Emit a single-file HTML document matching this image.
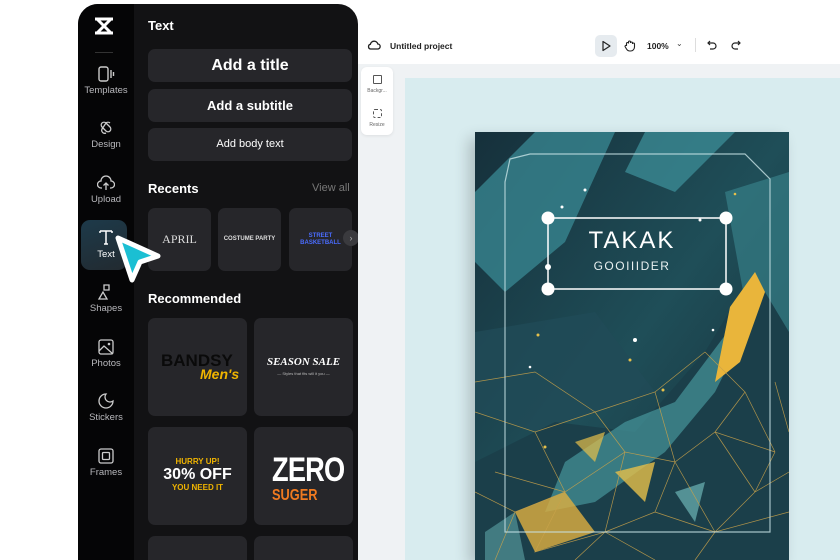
<!DOCTYPE html>
<html><head><meta charset="utf-8"><style>
*{margin:0;padding:0;box-sizing:border-box}
body{width:840px;height:560px;overflow:hidden;background:#fff;font-family:"Liberation Sans",sans-serif;position:relative}
.abs{position:absolute}
.panel{left:78px;top:4px;width:280px;height:556px;background:#121214;border-radius:20px 20px 0 0;overflow:hidden}
.nav{left:0;top:0;width:56px;height:100%;background:#050506}
.ni{position:absolute;left:0;width:56px;text-align:center;color:#b8b8bc;font-size:9.5px}
.ni svg{display:block;margin:0 auto 3px}
.btn{position:absolute;left:70px;width:204px;background:#26262a;border-radius:7px;color:#fff;text-align:center;font-weight:bold}
.card{position:absolute;background:#26262a;border-radius:7px}
.h{position:absolute;color:#fff;font-weight:bold;font-size:13px;left:70px}
</style></head><body>
<div class="abs" style="left:358px;top:64px;width:482px;height:496px;background:#eff2f4"></div>
<div class="abs" style="left:405px;top:78px;width:435px;height:482px;background:#d8ecef"></div>
<svg class="abs" style="left:367px;top:38px" width="14" height="14" viewBox="0 0 14 14"><path d="M3.5 11h7a2.5 2.5 0 0 0 .3-5A3.8 3.8 0 0 0 3.4 6.3 2.4 2.4 0 0 0 3.5 11z" fill="none" stroke="#222" stroke-width="1.3"/></svg>
<div class="abs" style="left:390px;top:41px;font-size:8.5px;color:#222;font-weight:bold">Untitled project</div>
<div class="abs" style="left:595px;top:35px;width:22px;height:22px;background:#e6ebef;border-radius:5px"></div>
<svg class="abs" style="left:600px;top:40px" width="12" height="12" viewBox="0 0 12 12"><path d="M3 1.5v9l7-4.5z" fill="none" stroke="#222" stroke-width="1.2" stroke-linejoin="round"/></svg>
<svg class="abs" style="left:623px;top:39px" width="13" height="13" viewBox="0 0 13 13"><path d="M3.5 7V4.5a1 1 0 0 1 2 0V3a1 1 0 0 1 2 0v1a1 1 0 0 1 2 0v1a1 1 0 0 1 2 0v3a4 4 0 0 1-4 4H7a4 4 0 0 1-3.5-2L2 7.5a1 1 0 0 1 1.5-1z" fill="none" stroke="#222" stroke-width="1.1"/></svg>
<div class="abs" style="left:647px;top:41px;font-size:8.5px;color:#222;font-weight:bold">100%</div>
<div class="abs" style="left:676px;top:39px;font-size:8px;color:#444">⌄</div>
<div class="abs" style="left:695px;top:38px;width:1px;height:14px;background:#ddd"></div>
<svg class="abs" style="left:706px;top:39px" width="12" height="12" viewBox="0 0 12 12"><path d="M4 2L2 4l2 2M2 4h5a3 3 0 0 1 0 6H4" fill="none" stroke="#222" stroke-width="1.2"/></svg>
<svg class="abs" style="left:730px;top:39px" width="12" height="12" viewBox="0 0 12 12"><path d="M8 2l2 2-2 2M10 4H5a3 3 0 0 0 0 6h3" fill="none" stroke="#222" stroke-width="1.2"/></svg>
<div class="abs" style="left:361px;top:67px;width:32px;height:68px;background:#fff;border-radius:6px;box-shadow:0 1px 3px rgba(0,0,0,.08)"></div>
<div class="abs" style="left:373px;top:75px;width:9px;height:9px;border:1px solid #555;border-radius:1px"></div>
<div class="abs" style="left:361px;top:88px;width:32px;text-align:center;font-size:5px;color:#666">Backgr...</div>
<div class="abs" style="left:373px;top:109px;width:9px;height:9px;border:1px dashed #555;border-radius:2px"></div>
<div class="abs" style="left:361px;top:122px;width:32px;text-align:center;font-size:5px;color:#666">Resize</div>
<svg class="abs" style="left:475px;top:132px;box-shadow:-6px 6px 14px rgba(0,0,0,.2)" width="314" height="428" viewBox="0 0 314 428">
<defs><linearGradient id="g" x1="0" y1="0" x2="1" y2="1"><stop offset="0" stop-color="#16303b"/><stop offset=".5" stop-color="#1f4e58"/><stop offset="1" stop-color="#152c36"/></linearGradient></defs>
<rect width="314" height="428" fill="url(#g)"/>
<polygon points="60,0 140,0 90,110 30,160 0,130 0,60" fill="#3a8a94" opacity=".75"/>
<polygon points="170,0 260,0 200,60 150,40" fill="#3f939c" opacity=".7"/>
<polygon points="250,60 314,40 314,200 270,170" fill="#367f88" opacity=".7"/>
<polygon points="0,200 120,180 180,260 60,300 0,280" fill="#214b57" opacity=".8"/>
<polygon points="0,330 80,290 160,300 230,220 260,170 290,160 314,200 314,428 0,428" fill="#1b3f4a"/>
<polygon points="90,330 150,290 200,270 230,230 260,190 270,200 240,260 190,320 120,370 70,380" fill="#4fa3a8" opacity=".6"/>
<polygon points="255,175 280,140 290,160 265,230 240,250" fill="#e9b53b"/>
<polygon points="40,380 90,360 120,400 60,420" fill="#e0b040" opacity=".8"/>
<polygon points="140,340 180,330 170,370" fill="#e6c04a" opacity=".8"/>
<polygon points="100,310 130,300 120,330" fill="#e6c04a" opacity=".7"/>
<polygon points="200,360 230,350 220,390" fill="#7cc8c8" opacity=".6"/>
<polygon points="10,400 40,380 50,428 10,428" fill="#6ab8b8" opacity=".5"/>
<g stroke="#c9a24a" stroke-width=".7" fill="none" opacity=".85">
<path d="M0 280L60 300L120 280L180 260L230 220M60 300L90 360L150 320L200 330L240 300L300 320M90 360L60 420L130 400L180 428M150 320L130 400M200 330L240 400L314 380M240 300L280 360L240 400M300 320L280 360M20 340L90 360M180 260L200 330M120 280L150 320M0 360L40 380L90 360M40 380L20 428M130 400L100 428M240 400L220 428M280 360L314 340M200 330L180 380L240 400M180 380L130 400M300 250L314 300M270 260L300 320M230 220L270 260L240 300M0 250L60 240L120 280"/>
</g>
<path d="M35 27L55 22H270L295 47V400H30V50Z" fill="none" stroke="#c8e4e6" stroke-width="1.2" opacity=".8"/>
<g fill="#fff"><circle cx="110" cy="58" r="1.5"/><circle cx="87" cy="75" r="1.5"/><circle cx="225" cy="88" r="1.5"/><circle cx="160" cy="208" r="2"/><circle cx="55" cy="235" r="1.3"/><circle cx="238" cy="198" r="1.3"/></g>
<g fill="#e6c04a"><circle cx="63" cy="203" r="1.5"/><circle cx="155" cy="228" r="1.5"/><circle cx="188" cy="258" r="1.5"/><circle cx="260" cy="62" r="1.3"/><circle cx="70" cy="315" r="1.5"/></g>
<text x="157" y="116" text-anchor="middle" fill="#fff" font-family="Liberation Sans" font-size="24" letter-spacing="2">TAKAK</text>
<text x="157" y="138" text-anchor="middle" fill="#e8f0f0" font-family="Liberation Sans" font-size="12" letter-spacing="1.5">GOOIIIDER</text>
<rect x="73" y="86" width="178" height="71" fill="none" stroke="#fff" stroke-width="1.5"/>
<g fill="#fff"><circle cx="73" cy="86" r="6.5"/><circle cx="251" cy="86" r="6.5"/><circle cx="73" cy="157" r="6.5"/><circle cx="251" cy="157" r="6.5"/><circle cx="73" cy="135" r="3"/></g>
</svg>
<div class="abs panel">
<div class="abs nav"></div>
<svg class="abs" style="left:15px;top:13px" width="22" height="18" viewBox="0 0 22 18"><path d="M2 2h18M2 16h18M4 2l14 14M18 2L4 16" stroke="#fff" stroke-width="3" fill="none"/></svg>
<div class="abs" style="left:17px;top:48px;width:18px;height:1px;background:#333"></div>
<div class="ni" style="top:62px"><svg width="18" height="16" viewBox="0 0 18 16"><rect x="2" y="1" width="9" height="14" rx="2" fill="none" stroke="#ccc" stroke-width="1.4"/><path d="M14 4v8M16.5 6v4" stroke="#ccc" stroke-width="1.4"/></svg>Templates</div>
<div class="ni" style="top:116px"><svg width="18" height="16" viewBox="0 0 18 16"><path d="M5 3a3 3 0 0 1 4 0l4 4a3 3 0 0 1 0 4 3 3 0 0 1-4 0L5 7a3 3 0 0 1 0-4zM13 3a3 3 0 0 0-4 0L5 9a3 3 0 0 0 4 4" fill="none" stroke="#ccc" stroke-width="1.3"/></svg>Design</div>
<div class="ni" style="top:171px"><svg width="18" height="16" viewBox="0 0 18 16"><path d="M5 13H4a3.5 3.5 0 0 1 0-7 5 5 0 0 1 10 0 3.5 3.5 0 0 1 0 7h-1M9 15V8M6.5 10.5L9 8l2.5 2.5" fill="none" stroke="#ccc" stroke-width="1.3"/></svg>Upload</div>
<div class="abs" style="left:3px;top:216px;width:46px;height:50px;border-radius:9px;background:linear-gradient(160deg,#1d3a4a,#222a30)"></div>
<div class="ni" style="top:224px;color:#fff"><svg width="18" height="18" viewBox="0 0 18 18"><path d="M3 3h12M9 3v13M3 3v2M15 3v2M7 16h4" fill="none" stroke="#fff" stroke-width="1.5"/></svg>Text</div>
<div class="ni" style="top:280px"><svg width="18" height="16" viewBox="0 0 18 16"><path d="M7 1l5 0 0 5-5 0zM2 15L6 8l4 7z" fill="none" stroke="#ccc" stroke-width="1.3"/></svg>Shapes</div>
<div class="ni" style="top:335px"><svg width="18" height="16" viewBox="0 0 18 16"><rect x="2" y="1" width="14" height="14" rx="2" fill="none" stroke="#ccc" stroke-width="1.3"/><path d="M2 12l5-5 9 8" fill="none" stroke="#ccc" stroke-width="1.3"/><circle cx="12" cy="5" r="1.3" fill="#ccc"/></svg>Photos</div>
<div class="ni" style="top:389px"><svg width="18" height="16" viewBox="0 0 18 16"><path d="M9 1a7 7 0 1 0 7 7 5 5 0 0 1-7-7z" fill="none" stroke="#ccc" stroke-width="1.3"/></svg>Stickers</div>
<div class="ni" style="top:444px"><svg width="18" height="16" viewBox="0 0 18 16"><rect x="2" y="1" width="14" height="14" rx="2" fill="none" stroke="#ccc" stroke-width="1.3"/><rect x="5.5" y="4.5" width="7" height="7" rx="1" fill="none" stroke="#ccc" stroke-width="1.3"/></svg>Frames</div>
<div class="h" style="top:14px">Text</div>
<div class="btn" style="top:45px;height:33px;line-height:33px;font-size:16px">Add a title</div>
<div class="btn" style="top:85px;height:33px;line-height:33px;font-size:13px">Add a subtitle</div>
<div class="btn" style="top:124px;height:33px;line-height:33px;font-size:11px;font-weight:normal">Add body text</div>
<div class="h" style="top:177px">Recents</div>
<div class="abs" style="left:234px;top:178px;font-size:11px;color:#777">View all</div>
<div class="card" style="left:70px;top:204px;width:63px;height:63px;color:#ddd;font-family:'Liberation Serif';font-size:12px;text-align:center;line-height:63px">APRIL</div>
<div class="card" style="left:140px;top:204px;width:63px;height:63px;color:#ddd;font-size:6px;font-weight:bold;text-align:center;line-height:63px">COSTUME PARTY</div>
<div class="card" style="left:211px;top:204px;width:63px;height:63px;color:#4a6cff;font-size:6px;font-weight:bold;text-align:center;padding-top:25px;line-height:7px">STREET<br>BASKETBALL</div>
<div class="abs" style="left:265px;top:226px;width:16px;height:16px;border-radius:50%;background:#3a3a3e;color:#aaa;font-size:9px;text-align:center;line-height:16px">›</div>
<div class="h" style="top:287px">Recommended</div>
<div class="card" style="left:70px;top:314px;width:99px;height:98px"><div style="position:absolute;left:13px;top:33px;font-weight:900;font-size:17px;color:#0a0a0a">BANDSY</div><div style="position:absolute;left:52px;top:48px;font-weight:bold;font-style:italic;font-size:14px;color:#f0b400">Men's</div></div>
<div class="card" style="left:176px;top:314px;width:99px;height:98px"><div style="position:absolute;left:0;width:99px;top:38px;text-align:center;font-family:'Liberation Serif';font-weight:bold;font-style:italic;font-size:11px;color:#fff">SEASON SALE</div><div style="position:absolute;left:0;width:99px;top:53px;text-align:center;font-size:4px;color:#bbb">— Styles that fits will it you —</div></div>
<div class="card" style="left:70px;top:423px;width:99px;height:98px;text-align:center"><div style="padding-top:30px;font-weight:bold;font-size:8px;color:#f0b400">HURRY UP!</div><div style="font-weight:900;font-size:16px;color:#fff;line-height:17px">30% OFF</div><div style="font-weight:bold;font-size:8px;color:#f0b400">YOU NEED IT</div></div>
<div class="card" style="left:176px;top:423px;width:99px;height:98px"><div style="position:absolute;left:18px;top:24px;font-weight:bold;font-size:34px;color:#fff;transform:scaleX(.8);transform-origin:left;letter-spacing:-1px">ZERO</div><div style="position:absolute;left:18px;top:60px;font-weight:bold;font-size:16px;color:#f07a20;transform:scaleX(.8);transform-origin:left">SUGER</div></div>
<div class="card" style="left:70px;top:532px;width:99px;height:40px"></div>
<div class="card" style="left:176px;top:532px;width:99px;height:40px"></div>
</div>
<svg class="abs" style="left:110px;top:232px" width="56" height="56" viewBox="0 0 56 56"><path d="M8 6L48 24L30 30L22 48Z" fill="#1bbfd3" stroke="#fff" stroke-width="5" stroke-linejoin="round"/></svg>
</body></html>
